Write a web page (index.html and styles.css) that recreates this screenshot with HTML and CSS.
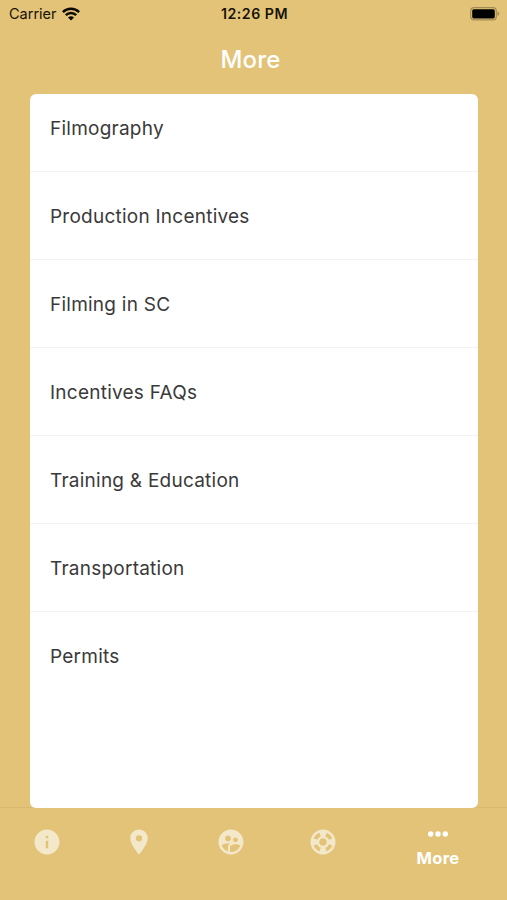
FILE: index.html
```html
<!DOCTYPE html>
<html lang="en">
<head>
<meta charset="utf-8">
<title>More</title>
<link rel="stylesheet" href="styles.css">
</head>
<body>
<div class="screen">
  <div class="status">
    <div class="carrier"><span>Carrier</span>
      <svg class="wifi" viewBox="0 0 18 14"><path d="M.9 5.100a11.400 11.400 0 0 1 16.200 0M3.800 8.200a7.300 7.300 0 0 1 10.400 0" fill="none" stroke="#0b0903" stroke-width="2.500"/><path d="M9 13.600 6 10.600a4.300 4.300 0 0 1 6 0z" fill="#0b0903"/></svg>
    </div>
    <div class="time">12:26 PM</div>
    <div class="power">
      <svg class="battery" viewBox="0 0 30 14"><rect x=".7" y=".7" width="25.6" height="12.2" rx="3.4" fill="none" stroke="#a38b54" stroke-width="1.2"/><rect x="2.2" y="2.2" width="22.6" height="9.2" rx="1.6" fill="#000"/><path d="M27.5 4.6c2.4 1 2.4 3.5 0 4.5z" fill="#a38b54"/></svg>
    </div>
  </div>
  <h1 class="title">More</h1>
  <div class="content">
    <ul class="list">
      <li class="row first"><span>Filmography</span></li>
      <li class="row"><span>Production Incentives</span></li>
      <li class="row"><span>Filming in SC</span></li>
      <li class="row"><span>Incentives FAQs</span></li>
      <li class="row"><span>Training &amp; Education</span></li>
      <li class="row"><span>Transportation</span></li>
      <li class="row last"><span>Permits</span></li>
    </ul>
  </div>
  <nav class="tabs">
    <div class="tab"><svg class="icon" viewBox="0 0 24 24"><path d="M12 2C6.48 2 2 6.48 2 12s4.48 10 10 10 10-4.48 10-10S17.520 2 12 2zm1 15h-2v-6h2v6zm0-8h-2V7h2v2z"/></svg></div>
    <div class="tab"><svg class="icon" viewBox="0 0 24 24"><path d="M12 2C8.130 2 5 5.130 5 9c0 5.250 7 13 7 13s7-7.750 7-13c0-3.870-3.130-7-7-7zm0 9.500a2.500 2.500 0 0 1 0-5 2.500 2.500 0 0 1 0 5z"/></svg></div>
    <div class="tab"><svg class="icon" viewBox="0 0 24 24"><path d="M11.990 2c-5.520 0-10 4.480-10 10s4.480 10 10 10 10-4.480 10-10-4.480-10-10-10zm3.610 6.340c1.070 0 1.930.86 1.930 1.930s-.86 1.930-1.930 1.930-1.930-.86-1.930-1.930c-.01-1.070.86-1.930 1.930-1.930zm-6-1.580c1.300 0 2.360 1.060 2.360 2.360s-1.060 2.360-2.360 2.360-2.360-1.060-2.360-2.360c0-1.310 1.050-2.360 2.360-2.360zm0 9.130v3.750c-2.400-.75-4.300-2.600-5.140-4.960 1.050-1.120 3.670-1.690 5.140-1.690.53 0 1.200.08 1.900.22-1.640.87-1.900 2.020-1.900 2.680zM11.990 20c-.27 0-.53-.01-.79-.04v-4.070c0-1.420 2.940-2.130 4.400-2.130 1.070 0 2.920.39 3.840 1.150-1.170 2.970-4.060 5.090-7.450 5.090z"/></svg></div>
    <div class="tab"><svg class="icon" viewBox="0 0 24 24"><path d="M12 2C6.480 2 2 6.480 2 12s4.480 10 10 10 10-4.480 10-10S17.520 2 12 2zm7.460 7.120-2.780 1.150a4.982 4.982 0 0 0-2.950-2.940l1.150-2.780c2.100.8 3.770 2.470 4.580 4.570zM12 15c-1.660 0-3-1.340-3-3s1.340-3 3-3 3 1.340 3 3-1.340 3-3 3zM9.130 4.540l1.170 2.780a5 5 0 0 0-2.980 2.970L4.540 9.130a7.984 7.984 0 0 1 4.590-4.590zM4.540 14.870l2.780-1.150a4.968 4.968 0 0 0 2.970 2.960l-1.170 2.780a7.996 7.996 0 0 1-4.580-4.590zm10.340 4.590-1.150-2.780a4.978 4.978 0 0 0 2.950-2.970l2.780 1.170a8.007 8.007 0 0 1-4.580 4.580z"/></svg></div>
    <div class="tab active"><svg class="dots" viewBox="0 0 20 6"><circle cx="2.7" cy="3" r="2.7"/><circle cx="10" cy="3" r="2.7"/><circle cx="17.300" cy="3" r="2.7"/></svg><span>More</span></div>
  </nav>
</div>
</body>
</html>
```
FILE: styles.css
```css
* { box-sizing: border-box; margin: 0; padding: 0; }
body { font-family: Inter, "Liberation Sans", sans-serif; background: #e3c378; }
.screen { width: 507px; height: 900px; display: flex; flex-direction: column; overflow: hidden; }
.status { height: 27px; display: grid; grid-template-columns: 1fr 100px 1fr; align-items: center; padding: 0 7px 0 9px; color: #171307; font-size: 14.5px; line-height: 18px; }
.carrier { display: flex; align-items: center; gap: 5px; }
.wifi { width: 18px; height: 14px; }
.time { text-align: center; font-weight: 600; font-size: 14.2px; letter-spacing: .5px; white-space: nowrap; }
.power { display: flex; justify-content: flex-end; }
.battery { width: 30px; height: 14px; }
.title { height: 67px; padding-right: 6px; text-align: center; color: #fff; font-size: 24px; font-weight: 500; line-height: 66px; letter-spacing: .2px; }
.content { height: 714px; padding: 0 29px 0 30px; background: linear-gradient(#d9ba73, #d9ba73) 0 100% / 100% 1px no-repeat; }
.list { list-style: none; height: 714px; background: #fff; border-radius: 6px; }
.row { height: 88px; padding: 2px 0 0 20px; display: flex; align-items: center; border-bottom: 1px solid #f2f2f2; color: #3a3a3a; font-size: 19px; letter-spacing: .24px; }
.row.first { height: 78px; padding: 0 0 9px 20px; }
.row.last { height: 87px; border-bottom: 0; }
.tabs { flex: 1; display: grid; grid-template-columns: 92px 92px 92px 92px 1fr; padding: 19px 0 0 1px; }
.tab { display: flex; flex-direction: column; align-items: center; }
.icon { width: 30px; height: 30px; fill: #f4e8cb; }
.active { color: #fff; font-size: 16.500px; font-weight: 700; line-height: 20px; letter-spacing: .3px; }
.dots { width: 20px; height: 6px; margin: 4px 0 11px; fill: #fff; }
```
